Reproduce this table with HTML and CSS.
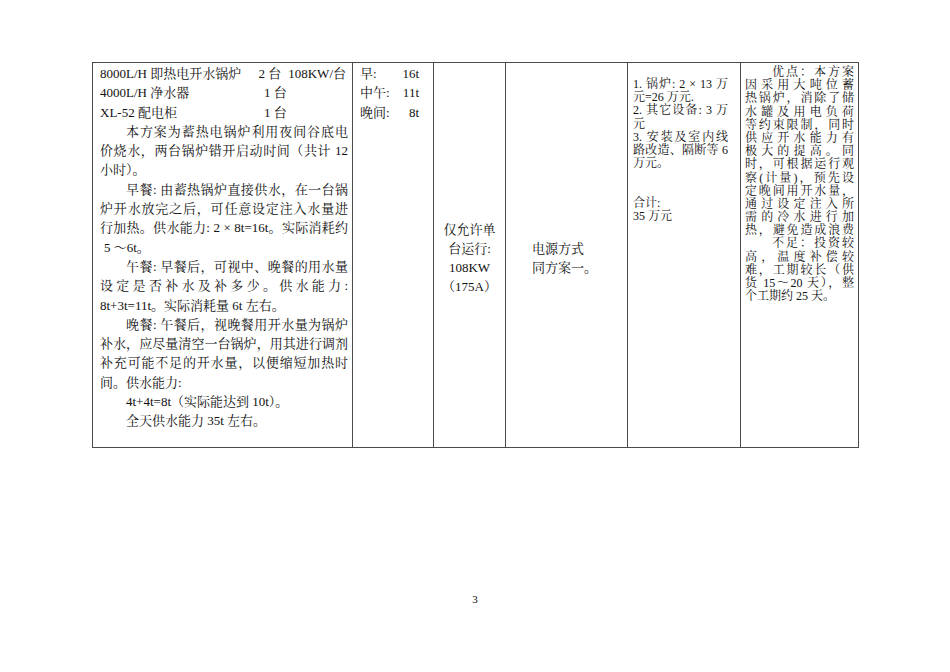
FILE: index.html
```html
<!DOCTYPE html>
<html lang="zh-CN">
<head>
<meta charset="utf-8">
<title>方案二</title>
<link rel="stylesheet" href="styles.css">
</head>
<body>
<div class="page">
  <div class="sheet">
    <div class="cell c1">
      <div class="line row1"><span class="r1a">8000L/H 即热电开水锅炉</span><span class="r1b">2 台</span><span class="r1c">108KW/台</span></div>
      <div class="line"><span class="lab">4000L/H 净水器</span><span>1 台</span></div>
      <div class="line"><span class="lab">XL-52 配电柜</span><span>1 台</span></div>
      <div class="line j ind">本方案为蓄热电锅炉利用夜间谷底电</div>
      <div class="line j">价烧水，两台锅炉错开启动时间（共计 12</div>
      <div class="line">小时）。</div>
      <div class="line j ind">早餐: 由蓄热锅炉直接供水，在一台锅</div>
      <div class="line j">炉开水放完之后，可任意设定注入水量进</div>
      <div class="line j">行加热。供水能力: 2 × 8t=16t。实际消耗约</div>
      <div class="line sm">5 ～6t。</div>
      <div class="line j ind">午餐: 早餐后，可视中、晚餐的用水量</div>
      <div class="line j">设定是否补水及补多少。供水能力:</div>
      <div class="line">8t+3t=11t。实际消耗量 6t 左右。</div>
      <div class="line j ind">晚餐: 午餐后，视晚餐用开水量为锅炉</div>
      <div class="line j">补水，应尽量清空一台锅炉，用其进行调剂</div>
      <div class="line j">补充可能不足的开水量，以便缩短加热时</div>
      <div class="line">间。供水能力:</div>
      <div class="line ind">4t+4t=8t（实际能达到 10t）。</div>
      <div class="line ind">全天供水能力 35t 左右。</div>
    </div>
    <div class="cell c2">
      <div class="line pair"><span>早:</span><span>16t</span></div>
      <div class="line pair"><span>中午:</span><span>11t</span></div>
      <div class="line pair"><span>晚间:</span><span>8t</span></div>
    </div>
    <div class="cell c3">
      <div class="line">仅允许单</div>
      <div class="line">台运行:</div>
      <div class="line">108KW</div>
      <div class="line">（175A）</div>
    </div>
    <div class="cell c4">
      <div class="line">电源方式</div>
      <div class="line">同方案一。</div>
    </div>
    <div class="cell c5">
      <div class="tl j">1. 锅炉: 2 × 13 万</div>
      <div class="tl">元=26 万元.</div>
      <div class="tl j">2. 其它设备: 3 万</div>
      <div class="tl">元</div>
      <div class="tl j">3. 安装及室内线</div>
      <div class="tl j">路改造、隔断等 6</div>
      <div class="tl">万元。</div>
      <div class="tl gap"></div>
      <div class="tl">合计:</div>
      <div class="tl">35 万元</div>
    </div>
    <div class="cell c6">
      <div class="tl j ind2">优点：本方案</div>
      <div class="tl j">因采用大吨位蓄</div>
      <div class="tl j">热锅炉，消除了储</div>
      <div class="tl j">水罐及用电负荷</div>
      <div class="tl j">等约束限制，同时</div>
      <div class="tl j">供应开水能力有</div>
      <div class="tl j">极大的提高。同</div>
      <div class="tl j">时，可根据运行观</div>
      <div class="tl j">察(计量)，预先设</div>
      <div class="tl j">定晚间用开水量，</div>
      <div class="tl j">通过设定注入所</div>
      <div class="tl j">需的冷水进行加</div>
      <div class="tl j">热，避免造成浪费</div>
      <div class="tl j ind2">不足：投资较</div>
      <div class="tl j">高，温度补偿较</div>
      <div class="tl j">难，工期较长（供</div>
      <div class="tl j">货 15～20 天），整</div>
      <div class="tl">个工期约 25 天。</div>
    </div>
  </div>
  <div class="pageno">3</div>
</div>
</body>
</html>
```
FILE: styles.css
```css
html, body {
  margin: 0;
  padding: 0;
  background: #ffffff;
}

body {
  color: #111111;
  font-family: "Liberation Serif", "Noto Serif CJK SC", "Noto Sans CJK SC", serif;
}

.page {
  width: 950px;
  height: 672px;
  padding-top: 62px;
  box-sizing: border-box;
}

.sheet {
  margin-left: 92px;
  width: 767px;
  height: 386px;
  box-sizing: border-box;
  border: 1px solid #4a4a4a;
  display: grid;
  grid-template-columns: 260px 81px 72px 122px 113px 117px;
}

.cell {
  box-sizing: border-box;
  border-right: 1px solid #4a4a4a;
  min-width: 0;
}

.cell:last-child {
  border-right: none;
}

.line {
  font-size: 13px;
  line-height: 19.3px;
  height: 19.3px;
  white-space: nowrap;
}

.j {
  text-align: justify;
  text-align-last: justify;
}

.ind {
  padding-left: 26px;
}

.sm {
  padding-left: 4px;
}

/* column 1 */
.c1 {
  padding: 1px 4px 0 7px;
}

.row1 {
  display: flex;
}

.r1b {
  margin-left: auto;
}

.r1c {
  margin-left: 7px;
  margin-right: 2px;
}

.lab {
  display: inline-block;
  width: 164px;
}

/* column 2 */
.c2 {
  padding: 1px 14px 0 7px;
}

.pair {
  display: flex;
  justify-content: space-between;
}

/* column 3 & 4 */
.c3,
.c4 {
  display: flex;
  flex-direction: column;
  justify-content: center;
  padding-top: 6px;
}

.c3 .line {
  text-align: center;
  height: 19px;
  line-height: 19px;
}

.c4 {
  padding-left: 26px;
}

.c4 .line {
  height: 19px;
  line-height: 19px;
}

/* columns 5 & 6 */
.tl {
  font-size: 12px;
  line-height: 13.2px;
  height: 13.2px;
  white-space: nowrap;
}

.c5 {
  padding: 15px 12px 0 5px;
}

.gap {
  height: 26.4px;
}

.c6 {
  padding: 3px 4px 0 4px;
}

.ind2 {
  padding-left: 27px;
}

.pageno {
  margin-top: 144px;
  text-align: center;
  font-size: 11px;
  line-height: 14px;
}
```
